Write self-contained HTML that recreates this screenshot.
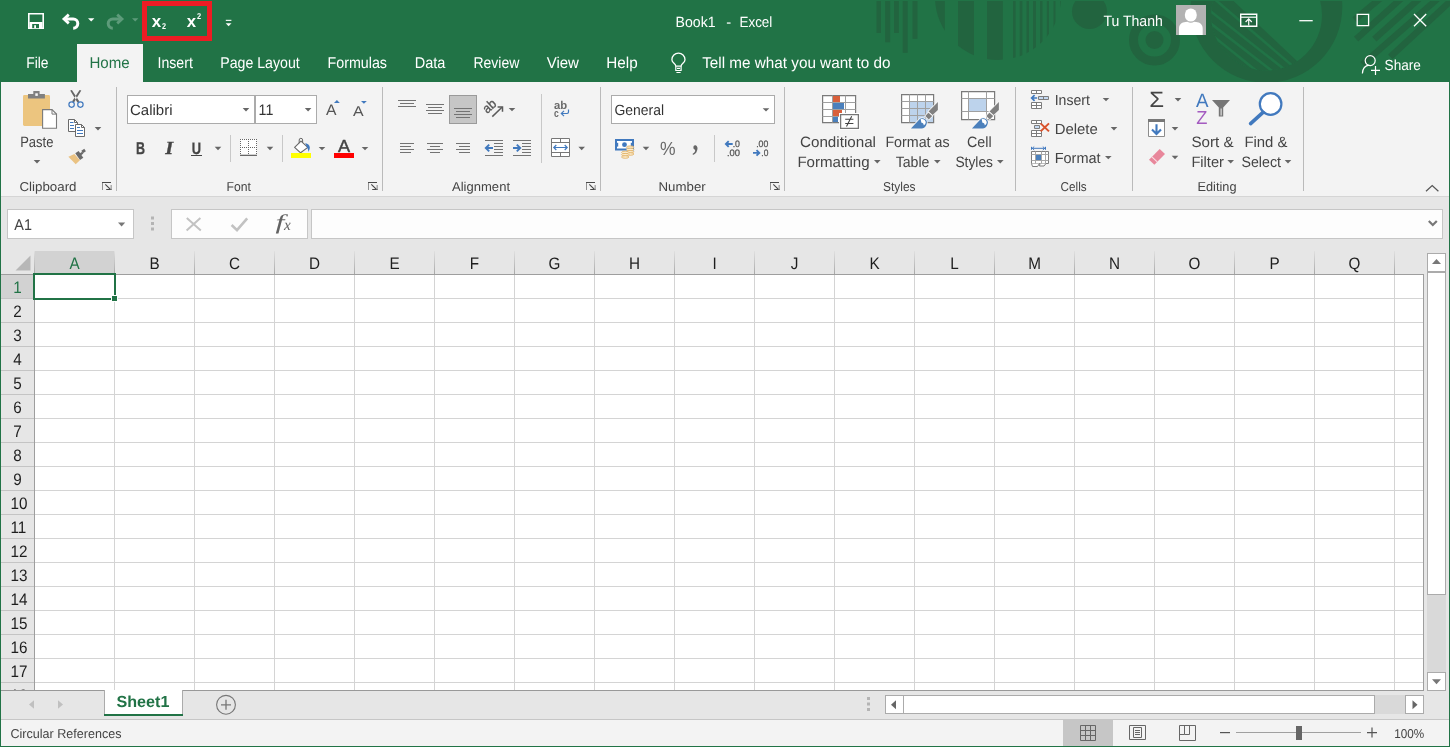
<!DOCTYPE html>
<html lang="en">
<head>
<meta charset="utf-8">
<title>Book1 - Excel</title>
<style>
html,body{margin:0;padding:0;background:#fff;overflow:hidden}
body{width:1450px;height:747px;position:relative;font-family:"Liberation Sans",sans-serif}
.region{position:absolute;left:0;width:1450px}
#titlebar{top:0;height:44px;background:#217346}
#tabrow{top:44px;height:38px;background:#217346}
#ribbon{top:82px;height:114px;background:#f3f3f3;border-bottom:1px solid #d5d5d5}
#formulabar{top:197px;height:54px;background:#e6e6e6}
#grid{top:251px;height:439px;background:#fff}
#sheetbar{top:690px;height:29px;background:#e6e6e6}
#statusbar{top:719px;height:28px;background:#f3f3f3}
#ui{position:absolute;left:0;top:0;width:1450px;height:747px;display:block;will-change:transform}
#ui text{white-space:pre}
</style>
</head>
<body>
<div id="titlebar" class="region"></div>
<div id="tabrow" class="region"></div>
<div id="ribbon" class="region"></div>
<div id="formulabar" class="region"></div>
<div id="grid" class="region"></div>
<div id="sheetbar" class="region"></div>
<div id="statusbar" class="region"></div>
<svg id="ui" width="1450" height="747" viewBox="0 0 1450 747" text-rendering="geometricPrecision">
<defs><clipPath id="cpHalf"><circle cx="998" cy="-3" r="63"/></clipPath><clipPath id="cpInner"><circle cx="1266.5" cy="15" r="55.5"/></clipPath><clipPath id="cpTop"><rect x="0" y="0" width="1450" height="82"/></clipPath></defs>
<g id="pattern" fill="#22643f" clip-path="url(#cpTop)">
<rect x="876.5" y="0" width="4.5" height="33" fill="#22643f"/>
<rect x="885.2" y="0" width="5.0" height="42.3" fill="#22643f"/>
<rect x="894" y="0" width="4.8" height="33" fill="#22643f"/>
<rect x="902.7" y="0" width="5.0" height="52.8" fill="#22643f"/>
<rect x="912.5" y="0" width="5.0" height="38.8" fill="#22643f"/>
<g clip-path="url(#cpHalf)">
<rect x="930" y="0" width="14.8" height="62" fill="#22643f"/>
<rect x="958" y="0" width="16" height="62" fill="#22643f"/>
<rect x="987" y="0" width="15.8" height="62" fill="#22643f"/>
<rect x="1013" y="0" width="2.6" height="62" fill="#22643f"/>
<rect x="1019.7" y="0" width="2.7" height="62" fill="#22643f"/>
<rect x="1026.5" y="0" width="2.5" height="62" fill="#22643f"/>
<rect x="1033" y="0" width="3" height="62" fill="#22643f"/>
<rect x="1040" y="0" width="2.5" height="62" fill="#22643f"/>
<rect x="1046.8" y="0" width="2.2" height="62" fill="#22643f"/>
<rect x="1053.5" y="0" width="2.0" height="62" fill="#22643f"/>
<rect x="1060" y="0" width="2.3" height="62" fill="#22643f"/>
</g>
<circle cx="1089.5" cy="11.5" r="17.5"/>
<circle cx="1154.5" cy="40" r="21" fill="none" stroke="#22643f" stroke-width="9"/>
<circle cx="1154.5" cy="40" r="9"/>
<path fill-rule="evenodd" d="M1190.7 7a75.8 75.8 0 1 0 151.6 0a75.8 75.8 0 1 0 -151.6 0zM1211 15a55.5 55.5 0 1 0 111 0a55.5 55.5 0 1 0 -111 0z"/>
<g clip-path="url(#cpInner)">
<path d="M1223.1 -8.9L1340 101.8L1150 120L1150 -8.9z"/>
<path d="M1142.1 -63.0L1366.5 129.3" stroke="#217346" stroke-width="2.6" fill="none"/>
<path d="M1133.3 -49.4L1358.6 127.6" stroke="#217346" stroke-width="2.6" fill="none"/>
<path d="M1146.0 -26.5L1335.0 119.6" stroke="#217346" stroke-width="2.6" fill="none"/>
<path d="M1163.9 -3.5L1305.8 110.5" stroke="#217346" stroke-width="2.6" fill="none"/>
</g>
<path d="M1354.5 19.8L1392.8 -12" stroke="#22643f" stroke-width="6.4" fill="none"/>
<path d="M1356.1 39.1L1412.9 -12" stroke="#22643f" stroke-width="6.4" fill="none"/>
<path d="M1374.3 39.1L1431.1 -12" stroke="#22643f" stroke-width="6.4" fill="none"/>
<path d="M1362.5 64.3L1449.9 -12" stroke="#22643f" stroke-width="6.4" fill="none"/>
<path d="M1390.3 56.8L1464.7 -12" stroke="#22643f" stroke-width="6.4" fill="none"/>
<rect x="0" y="0" width="1450" height="1" fill="#217346"/>
</g>
<g id="qat-save">
<path d="M28.8 13.8h14.4v14.4h-14.4z" fill="none" stroke="#fff" stroke-width="1.6"/>
<rect x="29.5" y="22" width="13" height="6" fill="#fff"/>
<rect x="32.2" y="24" width="6.8" height="4.2" fill="#217346"/>
<rect x="34.2" y="25.2" width="1.8" height="3" fill="#fff"/>
</g>
<g id="qat-undo">
<path d="M64.5 19H73.2A4.6 4.6 0 0 1 73.2 28.2" fill="none" stroke="#fff" stroke-width="3" stroke-linecap="butt"/>
<path d="M68.8 14.6L64 19L68.8 23.4" fill="none" stroke="#fff" stroke-width="2.8" stroke-linejoin="miter"/>
</g>
<path d="M88.00 18.20h6.4l-3.2 3.2z" fill="#fff"/>
<g id="qat-redo">
<path d="M121.5 19H112.8A4.6 4.6 0 0 0 112.8 28.2" fill="none" stroke="#5d9b7a" stroke-width="3"/>
<path d="M117.2 14.6L122 19L117.2 23.4" fill="none" stroke="#5d9b7a" stroke-width="2.8"/>
</g>
<path d="M132.00 18.20h6.4l-3.2 3.2z" fill="#5d9b7a"/>
<rect x="144.5" y="3.5" width="65" height="35" fill="none" stroke="#ed1c24" stroke-width="5"/>
<text x="151.80" y="27.00" font-family='"Liberation Sans", sans-serif' font-size="17.3" font-weight="bold" fill="#fff" textLength="9.42" lengthAdjust="spacingAndGlyphs">x</text>
<text x="162.10" y="28.90" font-family='"Liberation Sans", sans-serif' font-size="8.4" font-weight="bold" fill="#fff" textLength="4.02" lengthAdjust="spacingAndGlyphs">2</text>
<text x="186.70" y="27.00" font-family='"Liberation Sans", sans-serif' font-size="17.3" font-weight="bold" fill="#fff" textLength="9.32" lengthAdjust="spacingAndGlyphs">x</text>
<text x="196.90" y="19.10" font-family='"Liberation Sans", sans-serif' font-size="8.4" font-weight="bold" fill="#fff" textLength="4.12" lengthAdjust="spacingAndGlyphs">2</text>
<rect x="225.8" y="19.8" width="5.6" height="1.1" fill="#fff"/>
<path d="M225.70 23.20h5.8l-2.9 3z" fill="#fff"/>
<text x="675.60" y="26.90" font-family='"Liberation Sans", sans-serif' font-size="14.8" fill="#fff" textLength="40.01" lengthAdjust="spacingAndGlyphs">Book1</text>
<text x="726.20" y="26.90" font-family='"Liberation Sans", sans-serif' font-size="14.8" fill="#fff">-</text>
<text x="739.50" y="26.90" font-family='"Liberation Sans", sans-serif' font-size="14.8" fill="#fff" textLength="32.79" lengthAdjust="spacingAndGlyphs">Excel</text>
<text x="1103.40" y="25.80" font-family='"Liberation Sans", sans-serif' font-size="15" fill="#fff" textLength="59.38" lengthAdjust="spacingAndGlyphs">Tu Thanh</text>
<rect x="1176" y="5" width="30" height="30" fill="#b2b2b2"/>
<g id="avatar" fill="#fff">
<ellipse cx="1190.8" cy="15" rx="6" ry="6.6"/>
<path d="M1179 35v-6.5c0-4 3-6.3 6.5-6.5l2-.3c1.8 1.5 4.8 1.5 6.6 0l2 .3c3.5.2 6.6 2.5 6.6 6.5v6.5z" fill="#fff" stroke="none" stroke-width="1"/>
</g>
<g id="win-ribbonopts">
<path d="M1240.7 14.2h16v12h-16z" fill="none" stroke="#fff" stroke-width="1.4"/>
<path d="M1240.7 17.2h16" fill="none" stroke="#fff" stroke-width="1.2"/>
<path d="M1248.7 25.5v-6M1245.6 22l3.1-3.1l3.1 3.1" fill="none" stroke="#fff" stroke-width="1.2"/>
</g>
<path d="M1299.3 20.7h13.4" fill="none" stroke="#fff" stroke-width="1.3"/>
<path d="M1357.2 14.3h11.4v11.4h-11.4z" fill="none" stroke="#fff" stroke-width="1.3"/>
<path d="M1414 14L1426.2 26.2M1426.2 14L1414 26.2" fill="none" stroke="#fff" stroke-width="1.3"/>
<rect x="77" y="44" width="66" height="38" fill="#f3f3f3"/>
<text x="26.20" y="67.80" font-family='"Liberation Sans", sans-serif' font-size="15.7" fill="#fff" textLength="22.30" lengthAdjust="spacingAndGlyphs">File</text>
<text x="89.40" y="67.80" font-family='"Liberation Sans", sans-serif' font-size="15.7" fill="#217346" textLength="40.28" lengthAdjust="spacingAndGlyphs">Home</text>
<text x="157.50" y="67.80" font-family='"Liberation Sans", sans-serif' font-size="15.7" fill="#fff" textLength="35.31" lengthAdjust="spacingAndGlyphs">Insert</text>
<text x="220.30" y="67.80" font-family='"Liberation Sans", sans-serif' font-size="15.7" fill="#fff" textLength="79.41" lengthAdjust="spacingAndGlyphs">Page Layout</text>
<text x="327.50" y="67.80" font-family='"Liberation Sans", sans-serif' font-size="15.7" fill="#fff" textLength="59.48" lengthAdjust="spacingAndGlyphs">Formulas</text>
<text x="414.70" y="67.80" font-family='"Liberation Sans", sans-serif' font-size="15.7" fill="#fff" textLength="30.67" lengthAdjust="spacingAndGlyphs">Data</text>
<text x="473.40" y="67.80" font-family='"Liberation Sans", sans-serif' font-size="15.7" fill="#fff" textLength="45.94" lengthAdjust="spacingAndGlyphs">Review</text>
<text x="546.70" y="67.80" font-family='"Liberation Sans", sans-serif' font-size="15.7" fill="#fff" textLength="32.25" lengthAdjust="spacingAndGlyphs">View</text>
<text x="606.30" y="67.80" font-family='"Liberation Sans", sans-serif' font-size="15.7" fill="#fff" textLength="31.39" lengthAdjust="spacingAndGlyphs">Help</text>
<text x="702.20" y="67.80" font-family='"Liberation Sans", sans-serif' font-size="15.7" fill="#fff" textLength="188.38" lengthAdjust="spacingAndGlyphs">Tell me what you want to do</text>
<g id="bulb">
<path d="M675.8 66.2C675.8 63.6 671.9 62.8 671.9 59.7A6.55 6.55 0 0 1 685 59.7C685 62.8 681.1 63.6 681.1 66.2z" fill="none" stroke="#fff" stroke-width="1.3"/>
<path d="M675.8 66.2v4.3h5.3v-4.3M677 68.4h3M676.4 72.5h4.2" fill="none" stroke="#fff" stroke-width="1.2"/>
</g>
<g id="share">
<circle cx="1370.2" cy="60.6" r="5" fill="none" stroke="#fff" stroke-width="1.2"/>
<path d="M1362.4 73.5c.3-5 3-8 6.8-8.3" fill="none" stroke="#fff" stroke-width="1.2"/>
<path d="M1371 70.4h9M1375.5 65.9v9" fill="none" stroke="#fff" stroke-width="1.2"/>
</g>
<text x="1384.60" y="69.70" font-family='"Liberation Sans", sans-serif' font-size="14.6" fill="#fff" textLength="36.31" lengthAdjust="spacingAndGlyphs">Share</text>
<rect x="116" y="87" width="1" height="104" fill="#bababa"/>
<rect x="382" y="87" width="1" height="104" fill="#bababa"/>
<rect x="600" y="87" width="1" height="104" fill="#bababa"/>
<rect x="784" y="87" width="1" height="104" fill="#bababa"/>
<rect x="1015" y="87" width="1" height="104" fill="#bababa"/>
<rect x="1132" y="87" width="1" height="104" fill="#bababa"/>
<rect x="1303" y="87" width="1" height="104" fill="#bababa"/>
<g id="paste-icon">
<rect x="23" y="95" width="27" height="31" rx="1.4" fill="#ecc57f"/>
<path d="M28 98.6v-4.7h5.3v-2.9h6.3v2.9h5.3v4.7z" fill="#808080" stroke="none" stroke-width="1"/>
<rect x="35.3" y="93.3" width="2.5" height="2.6" fill="#f6f6f6"/>
<path d="M42.6 109.6h9.4l4.5 4.5v14.1h-13.9z" fill="#fff" stroke="#7a7a7a" stroke-width="1.1"/>
<path d="M52 109.6v4.5h4.5" fill="none" stroke="#7a7a7a" stroke-width="1"/>
</g>
<text x="20.20" y="146.90" font-family='"Liberation Sans", sans-serif' font-size="15.0" fill="#444" textLength="33.21" lengthAdjust="spacingAndGlyphs">Paste</text>
<path d="M33.70 160.00h6.6l-3.3 3.4z" fill="#666"/>
<g id="cut-icon">
<path d="M70.2 90.4l1.7-.4L79.4 101.6l-2 .9zM81.3 90.4l-1.7-.4L72 101.6l2 .9z" fill="#666" stroke="none" stroke-width="1"/>
<circle cx="71.6" cy="104.6" r="2.7" fill="none" stroke="#4179be" stroke-width="1.2"/>
<circle cx="80.4" cy="104.6" r="2.7" fill="none" stroke="#4179be" stroke-width="1.2"/>
</g>
<g id="copy-icon">
<path d="M68.5 119.5h6l3 3v9h-9z" fill="#fff" stroke="#6a6a6a" stroke-width="1"/>
<path d="M74.5 119.5v3h3" fill="none" stroke="#6a6a6a" stroke-width="1"/>
<path d="M75.5 124.5h6l3 3v9h-9z" fill="#fff" stroke="#6a6a6a" stroke-width="1"/>
<path d="M81.5 124.5v3h3" fill="none" stroke="#6a6a6a" stroke-width="1"/>
<path d="M70 122.5h3.5M70 125.5h4M70 128.5h4M77 127.5h3M77 130.5h6M77 133.5h6" fill="none" stroke="#4179be" stroke-width="1"/>
</g>
<path d="M94.70 127.00h6.6l-3.3 3.4z" fill="#666"/>
<g id="painter-icon">
<path d="M81.3 150.8L84.3 148.8L85.9 151.2L82.9 153.3z" fill="#6a6a6a" stroke="none" stroke-width="1"/>
<path d="M79.6 153.6L82.2 151.8L83.4 153.6L80.8 155.4z" fill="#6a6a6a" stroke="none" stroke-width="1"/>
<path d="M75.3 153.3L78.6 151L83.3 157.8L80 160.1z" fill="#6a6a6a" stroke="none" stroke-width="1"/>
<path d="M68.4 156.8L74.4 154L79.9 160.3L75.7 164.2z" fill="#eac282" stroke="none" stroke-width="1"/>
</g>
<text x="19.50" y="190.70" font-family='"Liberation Sans", sans-serif' font-size="12.9" fill="#444" textLength="57.01" lengthAdjust="spacingAndGlyphs">Clipboard</text>
<rect x="102" y="182" width="9" height="1" fill="#4a4a4a"/>
<rect x="102" y="183" width="1" height="7" fill="#909090"/>
<path d="M105.3 184.4L110.7 189.6" fill="none" stroke="#444" stroke-width="1.1"/>
<rect x="106.2" y="189" width="5.6" height="1" fill="#4a4a4a"/>
<rect x="110.6" y="185" width="1.1" height="5" fill="#909090"/>
<rect x="127.5" y="95.5" width="127" height="28" fill="#fff" stroke="#ababab" stroke-width="1"/>
<rect x="255.5" y="95.5" width="61" height="28" fill="#fff" stroke="#ababab" stroke-width="1"/>
<text x="130.00" y="114.80" font-family='"Liberation Sans", sans-serif' font-size="14.8" fill="#333" textLength="42.49" lengthAdjust="spacingAndGlyphs">Calibri</text>
<path d="M242.70 108.00h6.6l-3.3 3.4z" fill="#666"/>
<text x="258.60" y="115.00" font-family='"Liberation Sans", sans-serif' font-size="15.4" fill="#333" textLength="14.79" lengthAdjust="spacingAndGlyphs">11</text>
<path d="M304.80 108.00h6.6l-3.3 3.4z" fill="#666"/>
<text x="326.00" y="115.00" font-family='"Liberation Sans", sans-serif' font-size="15.2" fill="#555" textLength="10.49" lengthAdjust="spacingAndGlyphs">A</text>
<path d="M334 102.9l2.9-2.8l2.9 2.8z" fill="#4179be" stroke="none" stroke-width="1"/>
<text x="353.00" y="115.70" font-family='"Liberation Sans", sans-serif' font-size="14.2" fill="#555" textLength="10.62" lengthAdjust="spacingAndGlyphs">A</text>
<path d="M361 100.9l2.9 2.9l2.9-2.9z" fill="#4179be" stroke="none" stroke-width="1"/>
<text x="135.90" y="154.10" font-family='"Liberation Sans", sans-serif' font-size="17.2" font-weight="bold" fill="#444" textLength="9.02" lengthAdjust="spacingAndGlyphs" stroke="#444" stroke-width=".3">B</text>
<text x="165.32" y="154.10" font-family='"Liberation Serif", serif' font-size="18.4" font-weight="bold" font-style="italic" fill="#444" textLength="7.98" lengthAdjust="spacingAndGlyphs" stroke="#444" stroke-width=".3">I</text>
<text x="191.80" y="153.50" font-family='"Liberation Sans", sans-serif' font-size="16.4" font-weight="bold" fill="#444" textLength="9.30" lengthAdjust="spacingAndGlyphs" stroke="#444" stroke-width=".3">U</text>
<rect x="191" y="155" width="11" height="1" fill="#444"/>
<path d="M214.70 146.80h6.6l-3.3 3.4z" fill="#666"/>
<rect x="230" y="135" width="1" height="27" fill="#c8c8c8"/>
<g id="borders-icon">
<rect x="240" y="139" width="17" height="16" fill="#fff"/>
<rect x="240" y="139" width="1" height="1" fill="#666"/>
<rect x="242" y="139" width="1" height="1" fill="#666"/>
<rect x="244" y="139" width="1" height="1" fill="#666"/>
<rect x="246" y="139" width="1" height="1" fill="#666"/>
<rect x="248" y="139" width="1" height="1" fill="#666"/>
<rect x="250" y="139" width="1" height="1" fill="#666"/>
<rect x="252" y="139" width="1" height="1" fill="#666"/>
<rect x="254" y="139" width="1" height="1" fill="#666"/>
<rect x="256" y="139" width="1" height="1" fill="#666"/>
<rect x="240" y="147" width="1" height="1" fill="#666"/>
<rect x="242" y="147" width="1" height="1" fill="#666"/>
<rect x="244" y="147" width="1" height="1" fill="#666"/>
<rect x="246" y="147" width="1" height="1" fill="#666"/>
<rect x="248" y="147" width="1" height="1" fill="#666"/>
<rect x="250" y="147" width="1" height="1" fill="#666"/>
<rect x="252" y="147" width="1" height="1" fill="#666"/>
<rect x="254" y="147" width="1" height="1" fill="#666"/>
<rect x="256" y="147" width="1" height="1" fill="#666"/>
<rect x="240" y="139" width="1" height="1" fill="#666"/>
<rect x="240" y="141" width="1" height="1" fill="#666"/>
<rect x="240" y="143" width="1" height="1" fill="#666"/>
<rect x="240" y="145" width="1" height="1" fill="#666"/>
<rect x="240" y="147" width="1" height="1" fill="#666"/>
<rect x="240" y="149" width="1" height="1" fill="#666"/>
<rect x="240" y="151" width="1" height="1" fill="#666"/>
<rect x="240" y="153" width="1" height="1" fill="#666"/>
<rect x="248" y="139" width="1" height="1" fill="#666"/>
<rect x="248" y="141" width="1" height="1" fill="#666"/>
<rect x="248" y="143" width="1" height="1" fill="#666"/>
<rect x="248" y="145" width="1" height="1" fill="#666"/>
<rect x="248" y="147" width="1" height="1" fill="#666"/>
<rect x="248" y="149" width="1" height="1" fill="#666"/>
<rect x="248" y="151" width="1" height="1" fill="#666"/>
<rect x="248" y="153" width="1" height="1" fill="#666"/>
<rect x="256" y="139" width="1" height="1" fill="#666"/>
<rect x="256" y="141" width="1" height="1" fill="#666"/>
<rect x="256" y="143" width="1" height="1" fill="#666"/>
<rect x="256" y="145" width="1" height="1" fill="#666"/>
<rect x="256" y="147" width="1" height="1" fill="#666"/>
<rect x="256" y="149" width="1" height="1" fill="#666"/>
<rect x="256" y="151" width="1" height="1" fill="#666"/>
<rect x="256" y="153" width="1" height="1" fill="#666"/>
<rect x="240" y="154.7" width="17" height="1.3" fill="#666"/>
</g>
<path d="M266.70 146.80h6.6l-3.3 3.4z" fill="#666"/>
<rect x="282" y="135" width="1" height="27" fill="#c8c8c8"/>
<g id="fill-icon">
<path d="M301 141.2L307.8 147.4L300.6 152.8L294.6 147.4z" fill="#fff" stroke="#666" stroke-width="1.1" stroke-linejoin="round"/>
<path d="M299.2 143.2v-3.2a1.7 1.7 0 0 1 3.4 0v2.4" fill="none" stroke="#666" stroke-width="1"/>
<path d="M305.2 143c2.6.6 4.4 2.2 4.6 4.2c.1 1.6-.6 3.2-1.4 4.8c-.1-2-.5-3.4-1.3-4.6z" fill="#4179be" stroke="none" stroke-width="1"/>
<rect x="291" y="153" width="20" height="5" fill="#ffff00"/>
</g>
<path d="M318.70 146.90h6.6l-3.3 3.4z" fill="#666"/>
<text x="337.90" y="151.80" font-family='"Liberation Sans", sans-serif' font-size="17.5" fill="#444" textLength="12.12" lengthAdjust="spacingAndGlyphs" stroke="#444" stroke-width=".45">A</text>
<rect x="334" y="153" width="20" height="5" fill="#ff0000"/>
<path d="M361.70 146.90h6.6l-3.3 3.4z" fill="#666"/>
<text x="226.60" y="190.70" font-family='"Liberation Sans", sans-serif' font-size="12.9" fill="#444" textLength="24.41" lengthAdjust="spacingAndGlyphs">Font</text>
<rect x="368" y="182" width="9" height="1" fill="#4a4a4a"/>
<rect x="368" y="183" width="1" height="7" fill="#909090"/>
<path d="M371.3 184.4L376.7 189.6" fill="none" stroke="#444" stroke-width="1.1"/>
<rect x="372.2" y="189" width="5.6" height="1" fill="#4a4a4a"/>
<rect x="376.6" y="185" width="1.1" height="5" fill="#909090"/>
<rect x="398" y="100" width="18" height="1" fill="#737373"/>
<rect x="400" y="103" width="14" height="1" fill="#737373"/>
<rect x="398" y="106" width="18" height="1" fill="#737373"/>
<rect x="426" y="104" width="18" height="1" fill="#737373"/>
<rect x="428" y="107" width="14" height="1" fill="#737373"/>
<rect x="426" y="110" width="18" height="1" fill="#737373"/>
<rect x="428" y="113" width="14" height="1" fill="#737373"/>
<rect x="449.5" y="95.5" width="27" height="28" fill="#c6c6c6" stroke="#9a9a9a" stroke-width="1"/>
<rect x="454" y="108" width="18" height="1" fill="#737373"/>
<rect x="456" y="111" width="14" height="1" fill="#737373"/>
<rect x="454" y="114" width="18" height="1" fill="#737373"/>
<rect x="456" y="117" width="14" height="1" fill="#737373"/>
<g id="orient-icon">
<text transform="translate(487.2 114) rotate(-42)" font-family='"Liberation Sans", sans-serif' font-size="13.4" fill="#555" stroke="#555" stroke-width=".3" textLength="13.6" lengthAdjust="spacingAndGlyphs">ab</text>
<path d="M492.3 116.6L502 107.3" fill="none" stroke="#5a5a5a" stroke-width="1.5"/>
<path d="M497.6 106.9h4.9v4.9" fill="none" stroke="#5a5a5a" stroke-width="1.5"/>
</g>
<path d="M508.70 107.90h6.6l-3.3 3.4z" fill="#666"/>
<rect x="541" y="94" width="1" height="69" fill="#c8c8c8"/>
<g id="wrap-icon">
<text x="554.00" y="108.80" font-family='"Liberation Sans", sans-serif' font-size="11.4" font-weight="bold" fill="#6a6a6a" textLength="13.20" lengthAdjust="spacingAndGlyphs">ab</text>
<text x="554.00" y="116.70" font-family='"Liberation Sans", sans-serif' font-size="11.4" font-weight="bold" fill="#6a6a6a" textLength="4.79" lengthAdjust="spacingAndGlyphs">c</text>
<path d="M568.5 109.5v2.6a1.4 1.4 0 0 1 -1.4 1.4h-5.2" fill="none" stroke="#4179be" stroke-width="1.2"/>
<path d="M564 110.8l-2.7 2.7l2.7 2.7" fill="none" stroke="#4179be" stroke-width="1.2"/>
</g>
<g id="merge-icon">
<path d="M551.5 138.5h18v18h-18z" fill="#fff" stroke="#777" stroke-width="1"/>
<path d="M551.5 142.5h18M551.5 152.5h18M560.5 138.5v4M560.5 152.5v4" fill="none" stroke="#777" stroke-width="1"/>
<path d="M554 147.5h13M556.3 145l-2.5 2.5l2.5 2.5M564.7 145l2.5 2.5l-2.5 2.5" fill="none" stroke="#4179be" stroke-width="1.2"/>
</g>
<path d="M578.40 146.80h6.6l-3.3 3.4z" fill="#666"/>
<rect x="400" y="143" width="14" height="1" fill="#737373"/>
<rect x="400" y="146" width="11" height="1" fill="#737373"/>
<rect x="400" y="149" width="14" height="1" fill="#737373"/>
<rect x="400" y="152" width="11" height="1" fill="#737373"/>
<rect x="427" y="143" width="16" height="1" fill="#737373"/>
<rect x="430" y="146" width="10" height="1" fill="#737373"/>
<rect x="427" y="149" width="16" height="1" fill="#737373"/>
<rect x="430" y="152" width="10" height="1" fill="#737373"/>
<rect x="456" y="143" width="14" height="1" fill="#737373"/>
<rect x="459" y="146" width="11" height="1" fill="#737373"/>
<rect x="456" y="149" width="14" height="1" fill="#737373"/>
<rect x="459" y="152" width="11" height="1" fill="#737373"/>
<rect x="485" y="140" width="18" height="1" fill="#737373"/>
<rect x="485" y="155" width="18" height="1" fill="#737373"/>
<rect x="494" y="143" width="9" height="1" fill="#737373"/>
<rect x="494" y="146" width="9" height="1" fill="#737373"/>
<rect x="494" y="149" width="9" height="1" fill="#737373"/>
<rect x="494" y="152" width="9" height="1" fill="#737373"/>
<path d="M486 148h7M489.2 144.6l-3.4 3.4l3.4 3.4" fill="none" stroke="#4179be" stroke-width="1.9"/>
<rect x="513" y="140" width="18" height="1" fill="#737373"/>
<rect x="513" y="155" width="18" height="1" fill="#737373"/>
<rect x="522" y="143" width="9" height="1" fill="#737373"/>
<rect x="522" y="146" width="9" height="1" fill="#737373"/>
<rect x="522" y="149" width="9" height="1" fill="#737373"/>
<rect x="522" y="152" width="9" height="1" fill="#737373"/>
<path d="M513 148h7M516.8 144.6l3.4 3.4l-3.4 3.4" fill="none" stroke="#4179be" stroke-width="1.9"/>
<text x="452.00" y="190.70" font-family='"Liberation Sans", sans-serif' font-size="12.9" fill="#444" textLength="58.01" lengthAdjust="spacingAndGlyphs">Alignment</text>
<rect x="586" y="182" width="9" height="1" fill="#4a4a4a"/>
<rect x="586" y="183" width="1" height="7" fill="#909090"/>
<path d="M589.3 184.4L594.7 189.6" fill="none" stroke="#444" stroke-width="1.1"/>
<rect x="590.2" y="189" width="5.6" height="1" fill="#4a4a4a"/>
<rect x="594.6" y="185" width="1.1" height="5" fill="#909090"/>
<rect x="611.5" y="95.5" width="163" height="28" fill="#fff" stroke="#ababab" stroke-width="1"/>
<text x="614.50" y="114.80" font-family='"Liberation Sans", sans-serif' font-size="14.8" fill="#333" textLength="49.50" lengthAdjust="spacingAndGlyphs">General</text>
<path d="M762.70 108.20h6.6l-3.3 3.4z" fill="#666"/>
<g id="currency-icon">
<rect x="615" y="139" width="19" height="11.5" fill="#4179be"/>
<rect x="617" y="141" width="15" height="7.5" fill="#fff"/>
<circle cx="624.5" cy="144.7" r="2.4" fill="#4179be"/>
<rect x="615" y="142.8" width="3.2" height="3.8" fill="#4179be"/>
<rect x="630.8" y="142.8" width="3.2" height="3.8" fill="#4179be"/>
<ellipse cx="630.2" cy="147.2" rx="3.7" ry="1.25" fill="#fbeccf" stroke="#e2b36a" stroke-width=".9"/>
<ellipse cx="630.2" cy="149.5" rx="3.7" ry="1.25" fill="#fbeccf" stroke="#e2b36a" stroke-width=".9"/>
<ellipse cx="630.2" cy="151.8" rx="3.7" ry="1.25" fill="#fbeccf" stroke="#e2b36a" stroke-width=".9"/>
<ellipse cx="630.2" cy="154" rx="3.7" ry="1.25" fill="#fbeccf" stroke="#e2b36a" stroke-width=".9"/>
<ellipse cx="625.2" cy="152.4" rx="3.7" ry="1.25" fill="#fbeccf" stroke="#e2b36a" stroke-width=".9"/>
<ellipse cx="625.2" cy="154.7" rx="3.7" ry="1.25" fill="#fbeccf" stroke="#e2b36a" stroke-width=".9"/>
<ellipse cx="625.2" cy="157" rx="3.7" ry="1.25" fill="#fbeccf" stroke="#e2b36a" stroke-width=".9"/>
</g>
<path d="M642.70 146.80h6.6l-3.3 3.4z" fill="#666"/>
<text x="660.00" y="154.60" font-family='"Liberation Sans", sans-serif' font-size="19" fill="#6a6a6a" textLength="15.59" lengthAdjust="spacingAndGlyphs">%</text>
<text x="692.60" y="149.60" font-family='"Liberation Serif", serif' font-size="32" font-weight="bold" fill="#666" textLength="5.90" lengthAdjust="spacingAndGlyphs">,</text>
<rect x="714" y="135" width="1" height="27" fill="#c8c8c8"/>
<g id="dec-icons">
<text x="732.70" y="146.90" font-family='"Liberation Sans", sans-serif' font-size="9.3" fill="#555" textLength="7.31" lengthAdjust="spacingAndGlyphs" stroke="#555" stroke-width=".25">.0</text>
<text x="726.90" y="156.00" font-family='"Liberation Sans", sans-serif' font-size="9.3" fill="#555" textLength="13.08" lengthAdjust="spacingAndGlyphs" stroke="#555" stroke-width=".25">.00</text>
<path d="M725.9 144h6.8M728.7 141.2l-2.8 2.8l2.8 2.8" fill="none" stroke="#4179be" stroke-width="1.9"/>
<text x="756.20" y="146.90" font-family='"Liberation Sans", sans-serif' font-size="9.3" fill="#555" textLength="12.08" lengthAdjust="spacingAndGlyphs" stroke="#555" stroke-width=".25">.00</text>
<text x="761.30" y="156.00" font-family='"Liberation Sans", sans-serif' font-size="9.3" fill="#555" textLength="7.00" lengthAdjust="spacingAndGlyphs" stroke="#555" stroke-width=".25">.0</text>
<path d="M753 152.9h6.4M756.5 150.1l2.8 2.8l-2.8 2.8" fill="none" stroke="#4179be" stroke-width="1.9"/>
</g>
<text x="658.50" y="190.70" font-family='"Liberation Sans", sans-serif' font-size="12.9" fill="#444" textLength="47.18" lengthAdjust="spacingAndGlyphs">Number</text>
<rect x="770" y="182" width="9" height="1" fill="#4a4a4a"/>
<rect x="770" y="183" width="1" height="7" fill="#909090"/>
<path d="M773.3 184.4L778.7 189.6" fill="none" stroke="#444" stroke-width="1.1"/>
<rect x="774.2" y="189" width="5.6" height="1" fill="#4a4a4a"/>
<rect x="778.6" y="185" width="1.1" height="5" fill="#909090"/>
<g id="condfmt-icon">
<path d="M822.6 95.6h33v27h-33z" fill="#fff" stroke="#7a7a7a" stroke-width="1.2"/>
<path d="M822.5 102.5h33M822.5 109.5h33M822.5 116.5h33M832.5 95.5v27M845.5 95.5v27" fill="none" stroke="#a0a0a0" stroke-width="1"/>
<rect x="833" y="96" width="7" height="6" fill="#d9603b"/>
<rect x="833" y="103" width="11" height="6" fill="#4b80bc"/>
<rect x="833" y="110" width="9" height="6" fill="#d9603b"/>
<rect x="833" y="117" width="5" height="5" fill="#4b80bc"/>
<rect x="839" y="113" width="21" height="17" fill="#fff"/>
<path d="M840.6 114.6h17.8v13.8h-17.8z" fill="#fff" stroke="#777" stroke-width="1.3"/>
<path d="M845.2 119.3h8.2M845.2 123.5h8.2M851.7 116.3L846.5 126.6" fill="none" stroke="#444" stroke-width="1.1"/>
</g>
<text x="800.00" y="146.90" font-family='"Liberation Sans", sans-serif' font-size="15.0" fill="#444" textLength="76.00" lengthAdjust="spacingAndGlyphs">Conditional</text>
<text x="797.40" y="166.60" font-family='"Liberation Sans", sans-serif' font-size="15.0" fill="#444" textLength="72.19" lengthAdjust="spacingAndGlyphs">Formatting</text>
<path d="M874.00 160.00h6.6l-3.3 3.4z" fill="#666"/>
<g id="fmttable-icon">
<path d="M901.6 94.6h32v28h-32z" fill="#fff" stroke="#7a7a7a" stroke-width="1.2"/>
<rect x="910" y="102" width="23" height="20" fill="#bdd3ec"/>
<path d="M901.5 101.5h32M901.5 108.5h32M901.5 115.5h32M909.5 94.5v28M917.5 94.5v28M925.5 94.5v28" fill="none" stroke="#a0a0a0" stroke-width="1"/>
<path d="M937.90 102.00L937.90 110.00L932.60 115.00L928.50 111.50z" fill="#808080" stroke="#f6f6f6" stroke-width="1.6" paint-order="stroke"/>
<path d="M925.30 116.10L928.40 112.70L932.20 116.10L928.80 119.50z" fill="#808080" stroke="#f6f6f6" stroke-width="1.6" paint-order="stroke"/>
<path d="M910.93 128.59L920.04 118.73C922.31 117.21 926.87 119.11 926.87 122.14C926.87 125.94 923.83 128.59 920.80 128.59z" fill="#4b80bc" stroke="#f6f6f6" stroke-width="1.6" paint-order="stroke"/>
<path d="M920.65 119.26C922.69 118.20 925.96 119.87 925.73 122.52C925.58 124.04 924.59 125.03 923.68 125.33C923.83 123.66 922.69 122.52 921.40 122.75z" fill="#fff"/>
</g>
<text x="885.40" y="146.90" font-family='"Liberation Sans", sans-serif' font-size="15.0" fill="#444" textLength="64.21" lengthAdjust="spacingAndGlyphs">Format as</text>
<text x="895.70" y="166.60" font-family='"Liberation Sans", sans-serif' font-size="15.0" fill="#444" textLength="33.71" lengthAdjust="spacingAndGlyphs">Table</text>
<path d="M934.00 160.00h6.6l-3.3 3.4z" fill="#666"/>
<g id="cellstyles-icon">
<path d="M961.6 91.6h33v28h-33z" fill="#fff" stroke="#7a7a7a" stroke-width="1.2"/>
<rect x="969" y="99" width="17" height="12" fill="#bdd3ec"/>
<path d="M961.5 98.5h33M961.5 111.5h33M968.5 91.5v28M986.5 91.5v28" fill="none" stroke="#a0a0a0" stroke-width="1"/>
<path d="M998.90 102.00L998.90 110.00L993.60 115.00L989.50 111.50z" fill="#808080" stroke="#f6f6f6" stroke-width="1.6" paint-order="stroke"/>
<path d="M986.30 116.10L989.40 112.70L993.20 116.10L989.80 119.50z" fill="#808080" stroke="#f6f6f6" stroke-width="1.6" paint-order="stroke"/>
<path d="M971.93 128.59L981.04 118.73C983.31 117.21 987.87 119.11 987.87 122.14C987.87 125.94 984.83 128.59 981.80 128.59z" fill="#4b80bc" stroke="#f6f6f6" stroke-width="1.6" paint-order="stroke"/>
<path d="M981.65 119.26C983.69 118.20 986.96 119.87 986.73 122.52C986.58 124.04 985.59 125.03 984.68 125.33C984.83 123.66 983.69 122.52 982.40 122.75z" fill="#fff"/>
</g>
<text x="967.00" y="146.90" font-family='"Liberation Sans", sans-serif' font-size="15.0" fill="#444" textLength="24.59" lengthAdjust="spacingAndGlyphs">Cell</text>
<text x="955.40" y="166.60" font-family='"Liberation Sans", sans-serif' font-size="15.0" fill="#444" textLength="37.60" lengthAdjust="spacingAndGlyphs">Styles</text>
<path d="M997.00 160.00h6.6l-3.3 3.4z" fill="#666"/>
<text x="883.00" y="190.70" font-family='"Liberation Sans", sans-serif' font-size="12.9" fill="#444" textLength="32.58" lengthAdjust="spacingAndGlyphs">Styles</text>
<g id="insert-icon">
<path d="M1031.5 90.5h10v3h-10zM1036.5 90.5v3M1031.5 102.5h10v6h-10zM1031.5 105.5h10M1036.5 102.5v6" fill="#fff" stroke="#7d7d7d" stroke-width="1"/>
<path d="M1038.5 96.5h10v3h-10zM1043.5 96.5v3" fill="#c5d9f1" stroke="#7d7d7d" stroke-width="1"/>
<path d="M1031.6 98h5.6M1034.6 95.2l-2.9 2.8l2.9 2.8" fill="none" stroke="#4179be" stroke-width="1.7"/>
</g>
<text x="1054.70" y="104.90" font-family='"Liberation Sans", sans-serif' font-size="14.7" fill="#444" textLength="35.21" lengthAdjust="spacingAndGlyphs">Insert</text>
<path d="M1102.70 97.90h6.6l-3.3 3.4z" fill="#666"/>
<g id="delete-icon">
<path d="M1031.5 120.5h10v3h-10zM1036.5 120.5v3M1031.5 130.5h10v6h-10zM1031.5 133.5h10M1036.5 130.5v6" fill="#fff" stroke="#7d7d7d" stroke-width="1"/>
<path d="M1034.5 125.5h5v3h-5z" fill="#c5d9f1" stroke="#7d7d7d" stroke-width="1"/>
<path d="M1040.6 123.4l8.4 8M1049 123.4l-8.4 8" fill="none" stroke="#d9532c" stroke-width="2"/>
</g>
<text x="1054.70" y="133.80" font-family='"Liberation Sans", sans-serif' font-size="14.7" fill="#444" textLength="43.09" lengthAdjust="spacingAndGlyphs">Delete</text>
<path d="M1110.70 127.00h6.6l-3.3 3.4z" fill="#666"/>
<g id="format-icon">
<path d="M1031.5 146.8v3M1045.5 146.8v3M1032 148.3h13M1034.2 146.6l-1.9 1.7l1.9 1.7M1042.8 146.6l1.9 1.7l-1.9 1.7" fill="none" stroke="#4179be" stroke-width="1"/>
<path d="M1031.5 151.5h17v12h-17z" fill="#fff" stroke="#7d7d7d" stroke-width="1"/>
<path d="M1031.5 163.5l1 3h5l2-3M1040 163.5l-.5 2.5h4.5l2-2.5" fill="#fff" stroke="#7d7d7d" stroke-width="1"/>
<path d="M1031.5 154.5h17M1031.5 160.5h17M1035.5 151.5v12M1041.5 151.5v12M1045.5 151.5v12" fill="none" stroke="#a6a6a6" stroke-width="1"/>
<rect x="1036" y="155" width="5" height="5" fill="#4b80bc"/>
</g>
<text x="1054.70" y="162.70" font-family='"Liberation Sans", sans-serif' font-size="14.7" fill="#444" textLength="45.91" lengthAdjust="spacingAndGlyphs">Format</text>
<path d="M1105.00 155.90h6.6l-3.3 3.4z" fill="#666"/>
<text x="1060.60" y="190.70" font-family='"Liberation Sans", sans-serif' font-size="12.9" fill="#444" textLength="26.12" lengthAdjust="spacingAndGlyphs">Cells</text>
<text x="1149.20" y="107.00" font-family='"Liberation Sans", sans-serif' font-size="22.2" fill="#444" textLength="14.83" lengthAdjust="spacingAndGlyphs">Σ</text>
<path d="M1174.70 98.00h6.6l-3.3 3.4z" fill="#666"/>
<g id="fill-down-icon">
<path d="M1148.5 120.5h16v16h-16z" fill="#fff" stroke="#8c8c8c" stroke-width="1"/>
<rect x="1148" y="119" width="17" height="3" fill="#777"/>
<path d="M1156.5 124.2v9M1152 129.4l4.5 4.6l4.5-4.6" fill="none" stroke="#4179be" stroke-width="2.1"/>
</g>
<path d="M1171.70 127.00h6.6l-3.3 3.4z" fill="#666"/>
<g id="clear-icon">
<path d="M1149 159.7L1159.7 149L1165 154L1154.4 164.7z" fill="#e8879b" stroke="none" stroke-width="1" stroke="#e8879b" stroke-width="1" stroke-linejoin="round"/>
<path d="M1151.9 156.9L1157.2 161.9" fill="none" stroke="#f9dfe4" stroke-width="1.1"/>
</g>
<path d="M1171.70 155.80h6.6l-3.3 3.4z" fill="#666"/>
<text x="1195.90" y="106.80" font-family='"Liberation Sans", sans-serif' font-size="19.3" fill="#4179be" textLength="12.52" lengthAdjust="spacingAndGlyphs">A</text>
<text x="1196.30" y="123.70" font-family='"Liberation Sans", sans-serif' font-size="18.8" fill="#a45bc0" textLength="11.18" lengthAdjust="spacingAndGlyphs">Z</text>
<path d="M1212 100h18l-6.8 7.6v9h-4.4v-9z" fill="#767676" stroke="none" stroke-width="1"/>
<rect x="1220.6" y="108.5" width="1" height="7" fill="#f3f3f3"/>
<text x="1191.40" y="146.90" font-family='"Liberation Sans", sans-serif' font-size="15.0" fill="#444" textLength="42.18" lengthAdjust="spacingAndGlyphs">Sort &amp;</text>
<text x="1191.40" y="166.60" font-family='"Liberation Sans", sans-serif' font-size="15.0" fill="#444" textLength="32.58" lengthAdjust="spacingAndGlyphs">Filter</text>
<path d="M1227.40 160.00h6.6l-3.3 3.4z" fill="#666"/>
<circle cx="1270.6" cy="104" r="10.8" fill="#fff" stroke="#4179be" stroke-width="2.2"/>
<path d="M1263 112.3L1250.6 123.6" fill="none" stroke="#4179be" stroke-width="3.6" stroke-linecap="round"/>
<text x="1244.40" y="146.90" font-family='"Liberation Sans", sans-serif' font-size="15.0" fill="#444" textLength="43.10" lengthAdjust="spacingAndGlyphs">Find &amp;</text>
<text x="1241.50" y="166.60" font-family='"Liberation Sans", sans-serif' font-size="15.0" fill="#444" textLength="39.49" lengthAdjust="spacingAndGlyphs">Select</text>
<path d="M1284.70 160.00h6.6l-3.3 3.4z" fill="#666"/>
<text x="1197.50" y="190.70" font-family='"Liberation Sans", sans-serif' font-size="12.9" fill="#444" textLength="38.99" lengthAdjust="spacingAndGlyphs">Editing</text>
<path d="M1426 191.3l6.2-5.8l6.2 5.8" fill="none" stroke="#555" stroke-width="1.2"/>
<rect x="7.5" y="209.5" width="126" height="29" fill="#fff" stroke="#c6c6c6" stroke-width="1"/>
<text x="14.30" y="229.90" font-family='"Liberation Sans", sans-serif' font-size="15.5" fill="#444" textLength="17.61" lengthAdjust="spacingAndGlyphs">A1</text>
<path d="M118.00 222.40h7.2l-3.6 4z" fill="#777"/>
<rect x="151" y="216.5" width="3" height="3" fill="#b4b4b4"/>
<rect x="151" y="222" width="3" height="3" fill="#b4b4b4"/>
<rect x="151" y="227.5" width="3" height="3" fill="#b4b4b4"/>
<rect x="171.5" y="209.5" width="136" height="29" fill="#fdfdfd" stroke="#c6c6c6" stroke-width="1"/>
<path d="M186.8 218L200.8 230.6M200.4 218L186.6 230.4" fill="none" stroke="#c2c2c2" stroke-width="2"/>
<path d="M231.6 225l5.4 5.2l10.2-11.8" fill="none" stroke="#c2c2c2" stroke-width="2.6"/>
<text x="275.40" y="229.30" font-family='"Liberation Serif", serif' font-size="21" font-style="italic" fill="#636363" textLength="8.86" lengthAdjust="spacingAndGlyphs">f</text>
<text x="283.99" y="229.80" font-family='"Liberation Serif", serif' font-size="16" font-style="italic" fill="#636363" textLength="6.81" lengthAdjust="spacingAndGlyphs">x</text>
<rect x="311.5" y="209.5" width="1131" height="29" fill="#fdfdfd" stroke="#c6c6c6" stroke-width="1"/>
<path d="M1428.8 221l4 4l4-4" fill="none" stroke="#777" stroke-width="2.2"/>
<defs><clipPath id="cpGrid"><rect x="0" y="251" width="1424" height="439"/></clipPath><linearGradient id="hsep" x1="0" y1="0" x2="0" y2="1"><stop offset="0" stop-color="#e0e0e0"/><stop offset="1" stop-color="#a8a8a8"/></linearGradient></defs>
<g id="sheet" clip-path="url(#cpGrid)">
<rect x="1" y="251" width="1423" height="24" fill="#e6e6e6"/>
<rect x="1" y="251" width="34" height="439" fill="#e6e6e6"/>
<rect x="35" y="251" width="79" height="23" fill="#d2d2d2"/>
<rect x="1" y="275" width="33" height="23" fill="#d2d2d2"/>
<path d="M30.5 255.5v15h-15z" fill="#b7b7b7" stroke="none" stroke-width="1"/>
<rect x="114" y="275" width="1" height="415" fill="#d4d4d4"/>
<rect x="114" y="251" width="1" height="23" fill="url(#hsep)"/>
<rect x="194" y="275" width="1" height="415" fill="#d4d4d4"/>
<rect x="194" y="251" width="1" height="23" fill="url(#hsep)"/>
<rect x="274" y="275" width="1" height="415" fill="#d4d4d4"/>
<rect x="274" y="251" width="1" height="23" fill="url(#hsep)"/>
<rect x="354" y="275" width="1" height="415" fill="#d4d4d4"/>
<rect x="354" y="251" width="1" height="23" fill="url(#hsep)"/>
<rect x="434" y="275" width="1" height="415" fill="#d4d4d4"/>
<rect x="434" y="251" width="1" height="23" fill="url(#hsep)"/>
<rect x="514" y="275" width="1" height="415" fill="#d4d4d4"/>
<rect x="514" y="251" width="1" height="23" fill="url(#hsep)"/>
<rect x="594" y="275" width="1" height="415" fill="#d4d4d4"/>
<rect x="594" y="251" width="1" height="23" fill="url(#hsep)"/>
<rect x="674" y="275" width="1" height="415" fill="#d4d4d4"/>
<rect x="674" y="251" width="1" height="23" fill="url(#hsep)"/>
<rect x="754" y="275" width="1" height="415" fill="#d4d4d4"/>
<rect x="754" y="251" width="1" height="23" fill="url(#hsep)"/>
<rect x="834" y="275" width="1" height="415" fill="#d4d4d4"/>
<rect x="834" y="251" width="1" height="23" fill="url(#hsep)"/>
<rect x="914" y="275" width="1" height="415" fill="#d4d4d4"/>
<rect x="914" y="251" width="1" height="23" fill="url(#hsep)"/>
<rect x="994" y="275" width="1" height="415" fill="#d4d4d4"/>
<rect x="994" y="251" width="1" height="23" fill="url(#hsep)"/>
<rect x="1074" y="275" width="1" height="415" fill="#d4d4d4"/>
<rect x="1074" y="251" width="1" height="23" fill="url(#hsep)"/>
<rect x="1154" y="275" width="1" height="415" fill="#d4d4d4"/>
<rect x="1154" y="251" width="1" height="23" fill="url(#hsep)"/>
<rect x="1234" y="275" width="1" height="415" fill="#d4d4d4"/>
<rect x="1234" y="251" width="1" height="23" fill="url(#hsep)"/>
<rect x="1314" y="275" width="1" height="415" fill="#d4d4d4"/>
<rect x="1314" y="251" width="1" height="23" fill="url(#hsep)"/>
<rect x="1394" y="275" width="1" height="415" fill="#d4d4d4"/>
<rect x="1394" y="251" width="1" height="23" fill="url(#hsep)"/>
<rect x="1474" y="275" width="1" height="415" fill="#d4d4d4"/>
<rect x="1474" y="251" width="1" height="23" fill="url(#hsep)"/>
<rect x="35" y="298" width="1388" height="1" fill="#d4d4d4"/>
<rect x="1" y="298" width="33" height="1" fill="#c4c4c4"/>
<rect x="35" y="322" width="1388" height="1" fill="#d4d4d4"/>
<rect x="1" y="322" width="33" height="1" fill="#c4c4c4"/>
<rect x="35" y="346" width="1388" height="1" fill="#d4d4d4"/>
<rect x="1" y="346" width="33" height="1" fill="#c4c4c4"/>
<rect x="35" y="370" width="1388" height="1" fill="#d4d4d4"/>
<rect x="1" y="370" width="33" height="1" fill="#c4c4c4"/>
<rect x="35" y="394" width="1388" height="1" fill="#d4d4d4"/>
<rect x="1" y="394" width="33" height="1" fill="#c4c4c4"/>
<rect x="35" y="418" width="1388" height="1" fill="#d4d4d4"/>
<rect x="1" y="418" width="33" height="1" fill="#c4c4c4"/>
<rect x="35" y="442" width="1388" height="1" fill="#d4d4d4"/>
<rect x="1" y="442" width="33" height="1" fill="#c4c4c4"/>
<rect x="35" y="466" width="1388" height="1" fill="#d4d4d4"/>
<rect x="1" y="466" width="33" height="1" fill="#c4c4c4"/>
<rect x="35" y="490" width="1388" height="1" fill="#d4d4d4"/>
<rect x="1" y="490" width="33" height="1" fill="#c4c4c4"/>
<rect x="35" y="514" width="1388" height="1" fill="#d4d4d4"/>
<rect x="1" y="514" width="33" height="1" fill="#c4c4c4"/>
<rect x="35" y="538" width="1388" height="1" fill="#d4d4d4"/>
<rect x="1" y="538" width="33" height="1" fill="#c4c4c4"/>
<rect x="35" y="562" width="1388" height="1" fill="#d4d4d4"/>
<rect x="1" y="562" width="33" height="1" fill="#c4c4c4"/>
<rect x="35" y="586" width="1388" height="1" fill="#d4d4d4"/>
<rect x="1" y="586" width="33" height="1" fill="#c4c4c4"/>
<rect x="35" y="610" width="1388" height="1" fill="#d4d4d4"/>
<rect x="1" y="610" width="33" height="1" fill="#c4c4c4"/>
<rect x="35" y="634" width="1388" height="1" fill="#d4d4d4"/>
<rect x="1" y="634" width="33" height="1" fill="#c4c4c4"/>
<rect x="35" y="658" width="1388" height="1" fill="#d4d4d4"/>
<rect x="1" y="658" width="33" height="1" fill="#c4c4c4"/>
<rect x="35" y="682" width="1388" height="1" fill="#d4d4d4"/>
<rect x="1" y="682" width="33" height="1" fill="#c4c4c4"/>
<rect x="1" y="274" width="1423" height="1" fill="#9e9e9e"/>
<rect x="34" y="275" width="1" height="415" fill="#9e9e9e"/>
<rect x="34" y="251" width="1" height="23" fill="url(#hsep)"/>
<text x="69.42" y="269.00" font-family='"Liberation Sans", sans-serif' font-size="16.6" fill="#217346" textLength="10.19" lengthAdjust="spacingAndGlyphs">A</text>
<text x="149.42" y="269.00" font-family='"Liberation Sans", sans-serif' font-size="16.6" fill="#1e1e1e" textLength="10.19" lengthAdjust="spacingAndGlyphs">B</text>
<text x="228.98" y="269.00" font-family='"Liberation Sans", sans-serif' font-size="16.6" fill="#1e1e1e" textLength="11.03" lengthAdjust="spacingAndGlyphs">C</text>
<text x="308.98" y="269.00" font-family='"Liberation Sans", sans-serif' font-size="16.6" fill="#1e1e1e" textLength="11.03" lengthAdjust="spacingAndGlyphs">D</text>
<text x="389.42" y="269.00" font-family='"Liberation Sans", sans-serif' font-size="16.6" fill="#1e1e1e" textLength="10.19" lengthAdjust="spacingAndGlyphs">E</text>
<text x="469.83" y="269.00" font-family='"Liberation Sans", sans-serif' font-size="16.6" fill="#1e1e1e" textLength="9.33" lengthAdjust="spacingAndGlyphs">F</text>
<text x="548.57" y="269.00" font-family='"Liberation Sans", sans-serif' font-size="16.6" fill="#1e1e1e" textLength="11.88" lengthAdjust="spacingAndGlyphs">G</text>
<text x="628.98" y="269.00" font-family='"Liberation Sans", sans-serif' font-size="16.6" fill="#1e1e1e" textLength="11.03" lengthAdjust="spacingAndGlyphs">H</text>
<text x="712.38" y="269.00" font-family='"Liberation Sans", sans-serif' font-size="16.6" fill="#1e1e1e" textLength="4.24" lengthAdjust="spacingAndGlyphs">I</text>
<text x="790.68" y="269.00" font-family='"Liberation Sans", sans-serif' font-size="16.6" fill="#1e1e1e" textLength="7.64" lengthAdjust="spacingAndGlyphs">J</text>
<text x="869.42" y="269.00" font-family='"Liberation Sans", sans-serif' font-size="16.6" fill="#1e1e1e" textLength="10.19" lengthAdjust="spacingAndGlyphs">K</text>
<text x="950.25" y="269.00" font-family='"Liberation Sans", sans-serif' font-size="16.6" fill="#1e1e1e" textLength="8.49" lengthAdjust="spacingAndGlyphs">L</text>
<text x="1028.13" y="269.00" font-family='"Liberation Sans", sans-serif' font-size="16.6" fill="#1e1e1e" textLength="12.72" lengthAdjust="spacingAndGlyphs">M</text>
<text x="1108.98" y="269.00" font-family='"Liberation Sans", sans-serif' font-size="16.6" fill="#1e1e1e" textLength="11.03" lengthAdjust="spacingAndGlyphs">N</text>
<text x="1188.57" y="269.00" font-family='"Liberation Sans", sans-serif' font-size="16.6" fill="#1e1e1e" textLength="11.88" lengthAdjust="spacingAndGlyphs">O</text>
<text x="1269.42" y="269.00" font-family='"Liberation Sans", sans-serif' font-size="16.6" fill="#1e1e1e" textLength="10.19" lengthAdjust="spacingAndGlyphs">P</text>
<text x="1348.57" y="269.00" font-family='"Liberation Sans", sans-serif' font-size="16.6" fill="#1e1e1e" textLength="11.88" lengthAdjust="spacingAndGlyphs">Q</text>
<text x="13.25" y="293.00" font-family='"Liberation Sans", sans-serif' font-size="16.6" fill="#217346" textLength="8.49" lengthAdjust="spacingAndGlyphs">1</text>
<text x="13.25" y="317.00" font-family='"Liberation Sans", sans-serif' font-size="16.6" fill="#1e1e1e" textLength="8.49" lengthAdjust="spacingAndGlyphs">2</text>
<text x="13.25" y="341.00" font-family='"Liberation Sans", sans-serif' font-size="16.6" fill="#1e1e1e" textLength="8.49" lengthAdjust="spacingAndGlyphs">3</text>
<text x="13.25" y="365.00" font-family='"Liberation Sans", sans-serif' font-size="16.6" fill="#1e1e1e" textLength="8.49" lengthAdjust="spacingAndGlyphs">4</text>
<text x="13.25" y="389.00" font-family='"Liberation Sans", sans-serif' font-size="16.6" fill="#1e1e1e" textLength="8.49" lengthAdjust="spacingAndGlyphs">5</text>
<text x="13.25" y="413.00" font-family='"Liberation Sans", sans-serif' font-size="16.6" fill="#1e1e1e" textLength="8.49" lengthAdjust="spacingAndGlyphs">6</text>
<text x="13.25" y="437.00" font-family='"Liberation Sans", sans-serif' font-size="16.6" fill="#1e1e1e" textLength="8.49" lengthAdjust="spacingAndGlyphs">7</text>
<text x="13.25" y="461.00" font-family='"Liberation Sans", sans-serif' font-size="16.6" fill="#1e1e1e" textLength="8.49" lengthAdjust="spacingAndGlyphs">8</text>
<text x="13.25" y="485.00" font-family='"Liberation Sans", sans-serif' font-size="16.6" fill="#1e1e1e" textLength="8.49" lengthAdjust="spacingAndGlyphs">9</text>
<text x="10.50" y="509.00" font-family='"Liberation Sans", sans-serif' font-size="16.6" fill="#1e1e1e" textLength="16.99" lengthAdjust="spacingAndGlyphs">10</text>
<text x="10.50" y="533.00" font-family='"Liberation Sans", sans-serif' font-size="16.6" fill="#1e1e1e" textLength="15.85" lengthAdjust="spacingAndGlyphs">11</text>
<text x="10.50" y="557.00" font-family='"Liberation Sans", sans-serif' font-size="16.6" fill="#1e1e1e" textLength="16.99" lengthAdjust="spacingAndGlyphs">12</text>
<text x="10.50" y="581.00" font-family='"Liberation Sans", sans-serif' font-size="16.6" fill="#1e1e1e" textLength="16.99" lengthAdjust="spacingAndGlyphs">13</text>
<text x="10.50" y="605.00" font-family='"Liberation Sans", sans-serif' font-size="16.6" fill="#1e1e1e" textLength="16.99" lengthAdjust="spacingAndGlyphs">14</text>
<text x="10.50" y="629.00" font-family='"Liberation Sans", sans-serif' font-size="16.6" fill="#1e1e1e" textLength="16.99" lengthAdjust="spacingAndGlyphs">15</text>
<text x="10.50" y="653.00" font-family='"Liberation Sans", sans-serif' font-size="16.6" fill="#1e1e1e" textLength="16.99" lengthAdjust="spacingAndGlyphs">16</text>
<text x="10.50" y="677.00" font-family='"Liberation Sans", sans-serif' font-size="16.6" fill="#1e1e1e" textLength="16.99" lengthAdjust="spacingAndGlyphs">17</text>
<text x="10.50" y="701.00" font-family='"Liberation Sans", sans-serif' font-size="16.6" fill="#1e1e1e" textLength="16.99" lengthAdjust="spacingAndGlyphs">18</text>
</g>
<rect x="1424" y="251" width="25" height="468" fill="#e6e6e6"/>
<rect x="1423" y="275" width="1" height="416" fill="#9e9e9e"/>
<rect x="1" y="690" width="1423" height="1" fill="#999"/>
<rect x="34" y="274" width="81" height="25" fill="none" stroke="#217346" stroke-width="2"/>
<rect x="111" y="295" width="7" height="7" fill="#fff"/>
<rect x="112" y="296" width="5" height="5" fill="#217346"/>
<rect x="1427" y="253" width="19" height="437" fill="#d9d9d9"/>
<rect x="1427.5" y="253.5" width="18" height="18" fill="#fff" stroke="#ababab" stroke-width="1"/>
<path d="M1432 264h9l-4.5-5z" fill="#777" stroke="none" stroke-width="1"/>
<rect x="1427.5" y="272.5" width="18" height="322" fill="#fff" stroke="#ababab" stroke-width="1"/>
<rect x="1427.5" y="672.5" width="18" height="18" fill="#fff" stroke="#ababab" stroke-width="1"/>
<path d="M1432 679.3h9l-4.5 5z" fill="#777" stroke="none" stroke-width="1"/>
<path d="M29 704.5l5-4.3v8.6z" fill="#c0c0c0" stroke="none" stroke-width="1"/>
<path d="M63 704.5l-5-4.3v8.6z" fill="#c0c0c0" stroke="none" stroke-width="1"/>
<rect x="104" y="690" width="79" height="24" fill="#fff"/>
<rect x="104" y="690" width="1" height="24" fill="#ababab"/>
<rect x="182" y="690" width="1" height="24" fill="#ababab"/>
<rect x="104" y="714" width="79" height="2" fill="#217346"/>
<text x="116.50" y="707.00" font-family='"Liberation Sans", sans-serif' font-size="16" font-weight="bold" fill="#217346" textLength="52.92" lengthAdjust="spacingAndGlyphs">Sheet1</text>
<circle cx="226" cy="704.8" r="9.4" fill="none" stroke="#777" stroke-width="1.1"/>
<path d="M221 704.8h10M226 699.8v10" fill="none" stroke="#777" stroke-width="1.3"/>
<rect x="867" y="697" width="3" height="3" fill="#b4b4b4"/>
<rect x="867" y="702.5" width="3" height="3" fill="#b4b4b4"/>
<rect x="867" y="708" width="3" height="3" fill="#b4b4b4"/>
<rect x="885" y="695" width="539" height="19" fill="#d9d9d9"/>
<rect x="885.5" y="695.5" width="18" height="18" fill="#fff" stroke="#ababab" stroke-width="1"/>
<path d="M896 700.2v9l-5-4.5z" fill="#666" stroke="none" stroke-width="1"/>
<rect x="903.5" y="695.5" width="471" height="18" fill="#fff" stroke="#ababab" stroke-width="1"/>
<rect x="1405.5" y="695.5" width="18" height="18" fill="#fff" stroke="#ababab" stroke-width="1"/>
<path d="M1412.5 700.2v9l5-4.5z" fill="#666" stroke="none" stroke-width="1"/>
<rect x="0" y="719" width="1450" height="1" fill="#c6c6c6"/>
<text x="10.40" y="737.60" font-family='"Liberation Sans", sans-serif' font-size="12.9" fill="#444" textLength="111.19" lengthAdjust="spacingAndGlyphs">Circular References</text>
<rect x="1063" y="720" width="50" height="26" fill="#c6c6c6"/>
<path d="M1080.5 725.5h15v15h-15zM1085.5 725.5v15M1090.5 725.5v15M1080.5 730.5h15M1080.5 735.5h15" fill="none" stroke="#666" stroke-width="1"/>
<path d="M1129.5 725.5h16v14h-16z" fill="none" stroke="#666" stroke-width="1"/>
<path d="M1133.5 727.5h8v10h-8zM1135 730.5h5M1135 732.5h5M1135 734.5h5" fill="none" stroke="#666" stroke-width="1"/>
<path d="M1179.5 725.5h16v15h-16zM1184.5 725.5v9h5v-9M1179.5 734.5h5" fill="none" stroke="#666" stroke-width="1"/>
<rect x="1220" y="732" width="10" height="1.2" fill="#555"/>
<rect x="1236" y="732" width="125" height="1" fill="#a0a0a0"/>
<rect x="1296" y="726" width="6" height="14" fill="#666"/>
<path d="M1367 732.6h10M1372 727.6v10" fill="none" stroke="#555" stroke-width="1.2"/>
<text x="1394.20" y="737.60" font-family='"Liberation Sans", sans-serif' font-size="12.9" fill="#444" textLength="29.99" lengthAdjust="spacingAndGlyphs">100%</text>
<rect x="0" y="82" width="1" height="665" fill="#217346"/>
<rect x="1449" y="82" width="1" height="665" fill="#217346"/>
<rect x="0" y="746" width="1450" height="1" fill="#217346"/>
</svg>
</body>
</html>
